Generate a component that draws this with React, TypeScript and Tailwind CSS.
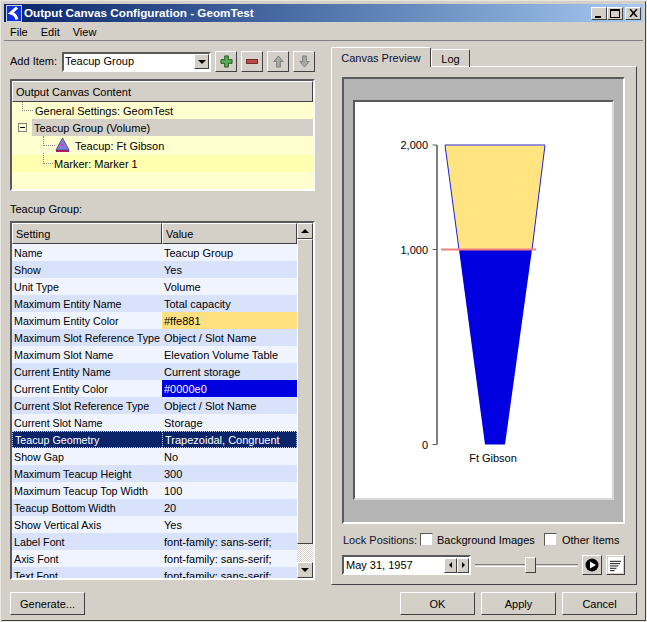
import { Fragment } from 'react';

const ROWS: [string, string, string?][] = [
  ['Name', 'Teacup Group'],
  ['Show', 'Yes'],
  ['Unit Type', 'Volume'],
  ['Maximum Entity Name', 'Total capacity'],
  ['Maximum Entity Color', '#ffe881', 'yellow'],
  ['Maximum Slot Reference Type', 'Object / Slot Name'],
  ['Maximum Slot Name', 'Elevation Volume Table'],
  ['Current Entity Name', 'Current storage'],
  ['Current Entity Color', '#0000e0', 'blue'],
  ['Current Slot Reference Type', 'Object / Slot Name'],
  ['Current Slot Name', 'Storage'],
  ['Teacup Geometry', 'Trapezoidal, Congruent', 'selected'],
  ['Show Gap', 'No'],
  ['Maximum Teacup Height', '300'],
  ['Maximum Teacup Top Width', '100'],
  ['Teacup Bottom Width', '20'],
  ['Show Vertical Axis', 'Yes'],
  ['Label Font', 'font-family: sans-serif;'],
  ['Axis Font', 'font-family: sans-serif;'],
  ['Text Font', 'font-family: sans-serif;'],
];

const raised = 'border border-t-white border-l-white border-r-[#404040] border-b-[#404040] bg-[#d4d0c8]';
const sunken = 'border-2 border-t-[#5a5a5a] border-l-[#5a5a5a] border-r-white border-b-white';

function ToolButton({ children }: { children: React.ReactNode }) {
  return <div className={`${raised} w-[22px] h-[21px] flex items-center justify-center`}>{children}</div>;
}

function CrossIcon() {
  return (
    <svg width="13" height="13" viewBox="0 0 14 14">
      <path d="M5 1h4v4h4v4H9v4H5V9H1V5h4z" fill="#58a858" stroke="#1f5a1f" />
    </svg>
  );
}

function Arrow({ down }: { down?: boolean }) {
  return (
    <svg width="13" height="13" viewBox="0 0 14 14">
      <path d={down ? 'M5 1h4v6h3l-5 6-5-6h3z' : 'M5 13h4V7h3L7 1 2 7h3z'} fill="#a8a8a4" stroke="#7c7c78" />
    </svg>
  );
}

function WinButton({ children }: { children: React.ReactNode }) {
  return <div className={`${raised} w-[16px] h-[13px] flex items-center justify-center`}>{children}</div>;
}

function DialogButton({ label, className }: { label: string; className: string }) {
  return <div className={`${raised} h-[23px] pt-[1px] flex items-center justify-center ${className}`}>{label}</div>;
}

function Checkbox() {
  return <div className="w-[13px] h-[13px] shrink-0 bg-white border border-t-[#5a5a5a] border-l-[#5a5a5a] border-r-[#d4d0c8] border-b-[#d4d0c8]" />;
}

function TreeLine({ className }: { className: string }) {
  return <span className={`absolute border-dotted border-[#808080] ${className}`} />;
}

function TeacupChart() {
  return (
    <svg width="256" height="396" viewBox="0 0 256 396" className="block font-['Liberation_Sans',sans-serif]">
      <path d="M90 43 L190 43 L177 147.5 L104 147.5 Z" fill="#ffe481" />
      <path d="M104 147.5 L177 147.5 L150 342.5 L130 342.5 Z" fill="#0000e0" />
      <path d="M190 43 L177 147.5 M90 43 L104 147.5" fill="none" stroke="#2020e0" />
      <path d="M90 43 H190" stroke="#7070d8" strokeWidth="1.5" />
      <path d="M86 147.5 H181" stroke="#f08080" strokeWidth="2" />
      <path d="M82 43 V342.5" stroke="#808080" strokeWidth="2" />
      <path d="M77.5 43 H82 M77.5 147.5 H82 M77.5 342.5 H82" stroke="#606060" />
      <text x="73" y="47" textAnchor="end" fontSize="11" fill="#000">2,000</text>
      <text x="73" y="151.5" textAnchor="end" fontSize="11" fill="#000">1,000</text>
      <text x="73" y="346.5" textAnchor="end" fontSize="11" fill="#000">0</text>
      <text x="138" y="360" textAnchor="middle" fontSize="11" fill="#000">Ft Gibson</text>
    </svg>
  );
}

export default function App() {
  return (
    <div className="w-[647px] h-[622px] overflow-hidden bg-[#d4d0c8] text-[11px] text-black font-['Liberation_Sans',sans-serif] flex flex-col border-2 border-[#d4d0c8] border-b-[#404040] border-r-[#404040] outline-1 -outline-offset-1 outline-[#e8e6e0]">
      <div className="mx-[2px] mt-[2px] h-[18px] shrink-0 flex items-center bg-gradient-to-r from-[#0a246a] to-[#a6caf0] pl-[2px] pr-[2px]">
        <svg width="16" height="17" viewBox="0 0 16 17" className="mr-[2px]">
          <rect x="0.5" y="0.5" width="15" height="16" fill="#1030e0" stroke="#c8d0f0" />
          <path d="M11 2.5 L5 8 Q9.5 9 11 14.5" fill="none" stroke="#fff" strokeWidth="3" />
        </svg>
        <span className="text-white font-bold text-[11.7px]">Output Canvas Configuration - GeomTest</span>
        <div className="ml-auto flex gap-0">
          <WinButton><span className="w-[6px] h-[2px] bg-black mt-[7px] mr-[2px]" /></WinButton>
          <WinButton><span className="w-[10px] h-[9px] border border-black border-t-2" /></WinButton>
          <div className="ml-[2px]">
            <WinButton>
              <svg width="9" height="8" viewBox="0 0 9 8"><path d="M1 0 L8 8 M8 0 L1 8" stroke="#000" strokeWidth="1.5" /></svg>
            </WinButton>
          </div>
        </div>
      </div>

      <div className="mx-[2px] h-[19px] pt-[2px] shrink-0 flex items-center gap-[13px] pl-[6px] border-b border-[#808080]">
        <span>File</span>
        <span>Edit</span>
        <span>View</span>
      </div>

      <div className="flex-1 min-h-0 flex gap-[16px] pl-[8px] pr-[8px] pt-[6px]">
        <div className="w-[305px] shrink-0 flex flex-col">
          <div className="h-[21px] mt-[4px] flex items-center shrink-0">
            <span className="w-[52px] shrink-0">Add Item:</span>
            <div className={`${sunken} w-[149px] h-[20px] bg-white flex items-center justify-between pl-[1px]`}>
              <span>Teacup Group</span>
              <div className={`${raised} w-[15px] h-[15px] flex items-center justify-center`}>
                <span className="w-0 h-0 border-x-[4px] border-x-transparent border-t-[4px] border-t-black" />
              </div>
            </div>
            <div className="flex gap-[4px] ml-[4px]">
              <ToolButton><CrossIcon /></ToolButton>
              <ToolButton><span className="w-[12px] h-[5px] bg-[#b84a4a] border border-[#7a2a2a]" /></ToolButton>
              <ToolButton><Arrow /></ToolButton>
              <ToolButton><Arrow down /></ToolButton>
            </div>
          </div>

          <div className={`${sunken} mt-[7px] h-[112px] bg-[#ffffd0] shrink-0`}>
            <div className={`${raised} h-[21px] pt-[1px] flex items-center pl-[3px]`}>Output Canvas Content</div>
            <div className="relative h-[17px] pt-[1px] flex items-center pl-[23px] bg-[#ffffd0]">
              <TreeLine className="left-[10px] top-0 h-[9px] w-[11px] border-l border-b" />
              General Settings: GeomTest
            </div>
            <div className="relative h-[17px] flex items-center pl-[20px]">
              <div className="absolute left-[6px] top-[4px] w-[9px] h-[9px] border border-[#808080] bg-[#ffffd0] flex items-center justify-center z-10">
                <span className="w-[5px] h-px bg-black" />
              </div>
              <span className="flex-1 bg-[#d4d0c8] h-full pt-[1px] flex items-center pl-[2px]">Teacup Group (Volume)</span>
            </div>
            <div className="relative h-[19px] pt-[1px] flex items-center pl-[63px]">
              <TreeLine className="left-[31px] top-0 h-[10px] w-[12px] border-l border-b" />
              <svg width="15" height="16" viewBox="0 0 15 16" className="absolute left-[43px] top-[1px]">
                <path d="M7.5 1 L14 13 L1 13 Z" fill="#8080e0" stroke="#505090" />
                <rect x="1" y="13" width="13" height="2" fill="#a02060" />
                <circle cx="7" cy="8" r="1.5" fill="#d040a0" />
              </svg>
              Teacup: Ft Gibson
            </div>
            <div className="relative h-[17px] pt-[1px] flex items-center pl-[42px] bg-[#ffffb0]">
              <TreeLine className="left-[31px] -top-[2px] h-[11px] w-[10px] border-l border-b" />
              Marker: Marker 1
            </div>
          </div>

          <div className="mt-[11px] h-[15px] flex items-center shrink-0">Teacup Group:</div>

          <div className={`${sunken} mt-[4px] h-[359px] flex bg-white shrink-0`}>
            <div className="flex-1 min-w-0 overflow-hidden flex flex-col">
              <div className="flex shrink-0 h-[21px]">
                <div className={`${raised} w-[150px] pt-[1px] flex items-center pl-[3px]`}>Setting</div>
                <div className={`${raised} flex-1 pt-[1px] flex items-center pl-[3px]`}>Value</div>
              </div>
              <div className="grid grid-cols-[150px_1fr] auto-rows-[17px]">
                {ROWS.map(([name, value, kind], i) => {
                  const bg = i % 2 === 0 ? 'bg-[#f0f4ff]' : 'bg-[#d8e2fb]';
                  const sel = kind === 'selected';
                  const selClass = 'bg-[#0a246a] text-white border border-dotted border-[#c8d0e8]';
                  return (
                    <Fragment key={name}>
                      <div className={`pl-[2px] pt-[1px] text-[10.7px] flex items-center whitespace-nowrap ${sel ? `${selClass} border-r-0` : bg}`}>{name}</div>
                      <div
                        className={`pl-[2px] pt-[1px] flex items-center whitespace-nowrap ${
                          sel ? selClass : kind === 'yellow' ? 'bg-[#ffe081]' : kind === 'blue' ? 'bg-[#0000e0] text-white' : bg
                        }`}
                      >
                        {value}
                      </div>
                    </Fragment>
                  );
                })}
              </div>
            </div>
            <div className="w-[16px] shrink-0 flex flex-col bg-[#ecebe7]">
              <div className={`${raised} h-[16px] shrink-0 flex items-center justify-center`}>
                <span className="w-0 h-0 border-x-[4px] border-x-transparent border-b-[4px] border-b-black" />
              </div>
              <div className={`${raised} h-[305px] shrink-0`} />
              <div className="flex-1 bg-[repeating-conic-gradient(#d4d0c8_0_25%,#ffffff_0_50%)] bg-[length:2px_2px]" />
              <div className={`${raised} h-[16px] shrink-0 flex items-center justify-center`}>
                <span className="w-0 h-0 border-x-[4px] border-x-transparent border-t-[4px] border-t-black" />
              </div>
            </div>
          </div>

          <div className="mt-[12px]">
            <DialogButton label="Generate..." className="w-[75px]" />
          </div>
        </div>

        <div className="flex-1 min-w-0 flex flex-col">
          <div className="flex h-[20px] items-end relative z-10 shrink-0">
            <div className="h-[20px] w-[100px] pt-[1px] border border-b-0 border-t-white border-l-white border-r-[#404040] rounded-t-[2px] flex items-center justify-center bg-[#d4d0c8] text-[#101030]">Canvas Preview</div>
            <div className="h-[18px] w-[39px] pt-[1px] border border-b-0 border-t-white border-l-white border-r-[#404040] rounded-t-[2px] flex items-center justify-center">Log</div>
          </div>
          <div className="h-[519px] -mt-px border border-t-white border-l-white border-r-[#404040] border-b-[#404040] pl-[10px] pr-[11px] pt-[10px] flex flex-col shrink-0">
            <div className={`${sunken} h-[447px] bg-[#b4b4b4] px-[9px] pt-[21px] shrink-0`}>
              <div className="h-[400px] bg-white border-2 border-t-[#5a5a5a] border-l-[#5a5a5a] border-r-[#d8d8d8] border-b-[#d8d8d8]">
                <TeacupChart />
              </div>
            </div>
            <div className="flex items-center mt-[9px] h-[13px] shrink-0 pl-[1px] whitespace-nowrap">
              <span className="w-[77px] shrink-0 pt-[1px] text-[#101030]">Lock Positions:</span>
              <Checkbox />
              <span className="ml-[4px] w-[107px] pt-[1px] shrink-0">Background Images</span>
              <Checkbox />
              <span className="ml-[5px] pt-[1px]">Other Items</span>
            </div>
            <div className="flex items-center mt-[9px] h-[20px] shrink-0">
              <div className={`${sunken} w-[129px] h-[20px] bg-white flex items-center justify-between pl-[2px]`}>
                <span className="pt-[1px]">May 31, 1957</span>
                <div className="flex">
                  <div className={`${raised} w-[13px] h-[15px] flex items-center justify-center`}>
                    <span className="w-0 h-0 border-y-[3px] border-y-transparent border-r-[3px] border-r-black" />
                  </div>
                  <div className={`${raised} w-[12px] h-[15px] flex items-center justify-center`}>
                    <span className="w-0 h-0 border-y-[3px] border-y-transparent border-l-[3px] border-l-black" />
                  </div>
                </div>
              </div>
              <div className="relative w-[103px] h-[20px] ml-[4px] flex items-center">
                <div className="w-full h-[3px] border-t border-t-[#808080] border-b border-b-white" />
                <div className={`${raised} absolute left-[50px] top-[2px] w-[11px] h-[16px]`} />
              </div>
              <div className={`${raised} ml-[4px] w-[20px] h-[20px] flex items-center justify-center`}>
                <svg width="14" height="14" viewBox="0 0 14 14">
                  <circle cx="7" cy="7" r="6.5" fill="#000" />
                  <path d="M5 3.5 L11 7 L5 10.5 Z" fill="#fff" />
                </svg>
              </div>
              <div className={`${raised} ml-[4px] w-[19px] h-[20px] p-px`}>
                <div className="w-full h-full bg-white flex items-center justify-center">
                  <svg width="13" height="13" viewBox="0 0 14 14">
                    <path d="M1 2.5H13 M1 5H12 M1 7.5H10 M1 10H8 M1 12.5H6" stroke="#000" />
                  </svg>
                </div>
              </div>
            </div>
          </div>
          <div className="flex justify-end gap-[6px] mt-[7px]">
            <DialogButton label="OK" className="w-[75px]" />
            <DialogButton label="Apply" className="w-[75px]" />
            <DialogButton label="Cancel" className="w-[75px]" />
          </div>
        </div>
      </div>
    </div>
  );
}
